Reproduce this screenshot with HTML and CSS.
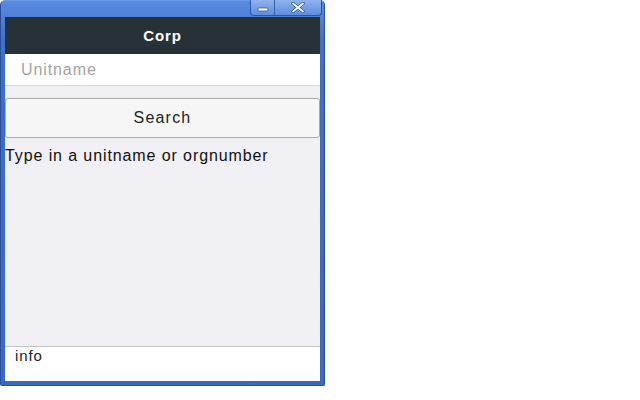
FILE: index.html
```html
<!DOCTYPE html>
<html>
<head>
<meta charset="utf-8">
<link rel="stylesheet" href="styles.css">
</head>
<body>
<div class="window">
  <div class="titlebar">
    <div class="caption-buttons">
      <div class="cbtn cbtn-min"><svg width="12" height="6" viewBox="0 0 12 6"><rect x="1" y="2" width="10" height="3" rx="1" fill="#fff" stroke="#35559a" stroke-width="0.8"/></svg></div>
      <div class="cbtn cbtn-close"><svg width="14" height="11" viewBox="0 0 14 11"><path d="M2 1.5 L12 9.5 M12 1.5 L2 9.5" stroke="#35559a" stroke-width="3.4" stroke-linecap="round"/><path d="M2 1.5 L12 9.5 M12 1.5 L2 9.5" stroke="#fff" stroke-width="1.8" stroke-linecap="round"/></svg></div>
    </div>
  </div>
  <div class="client">
    <div class="header">Corp</div>
    <div class="search-field"><span class="placeholder">Unitname</span></div>
    <div class="search-btn">Search</div>
    <div class="hint">Type in a unitname or orgnumber</div>
    <div class="spacer"></div>
    <div class="footer">info</div>
  </div>
</div>
</body>
</html>
```
FILE: styles.css
```css
html, body {
  margin: 0;
  padding: 0;
  background: #fff;
}
body {
  width: 640px;
  height: 400px;
  font-family: "Liberation Sans", Arial, sans-serif;
}
.window {
  width: 325px;
  height: 386px;
  box-sizing: border-box;
  padding: 0 4px 4px 4px;
  display: flex;
  flex-direction: column;
  background: linear-gradient(#5b8be0, #3f6fca 40px, #3a68c4);
  border: 1px solid #2a4f9a;
  border-top-color: #6b9ae6;
  border-radius: 5px 5px 2px 2px;
}
.titlebar {
  height: 16px;
  flex: none;
  display: flex;
  justify-content: flex-end;
}
.caption-buttons {
  display: flex;
  height: 15px;
  margin-top: -1px;
  margin-right: -2px;
  border: 1px solid #2f55a0;
  border-top: none;
  border-radius: 0 0 4px 4px;
  overflow: hidden;
  background: linear-gradient(#8fb3ee, #5d8ddd);
}
.cbtn {
  display: flex;
  align-items: center;
  justify-content: center;
}
.cbtn-min {
  width: 23px;
  border-right: 1px solid #3a62ad;
  padding-top: 3px;
}
.cbtn-close {
  width: 46px;
}
.client {
  flex: 1;
  display: flex;
  flex-direction: column;
  background: #efeff4;
}
.header {
  height: 37px;
  flex: none;
  background: #263238;
  color: #fff;
  font-weight: bold;
  font-size: 15px;
  letter-spacing: 0.9px;
  display: flex;
  align-items: center;
  justify-content: center;
}
.search-field {
  height: 31px;
  flex: none;
  background: #fff;
  border-bottom: 1px solid #d6d6da;
  display: flex;
  align-items: center;
  padding-left: 16px;
}
.placeholder {
  color: #a3a3a3;
  font-size: 16px;
  letter-spacing: 0.9px;
}
.search-btn {
  margin-top: 12px;
  height: 38px;
  flex: none;
  border: 1px solid #a9a9a9;
  border-radius: 3px;
  background: #f6f6f6;
  display: flex;
  align-items: center;
  justify-content: center;
  font-size: 16px;
  letter-spacing: 1.2px;
  color: #222;
}
.hint {
  margin-top: 9px;
  font-size: 16px;
  letter-spacing: 0.9px;
  color: #111;
  padding-left: 0;
}
.spacer {
  flex: 1;
}
.footer {
  height: 35px;
  flex: none;
  background: #fff;
  border-top: 1px solid #c4c4c8;
  font-size: 15px;
  letter-spacing: 0.9px;
  color: #222;
  padding-left: 10px;
  box-sizing: border-box;
}
```
